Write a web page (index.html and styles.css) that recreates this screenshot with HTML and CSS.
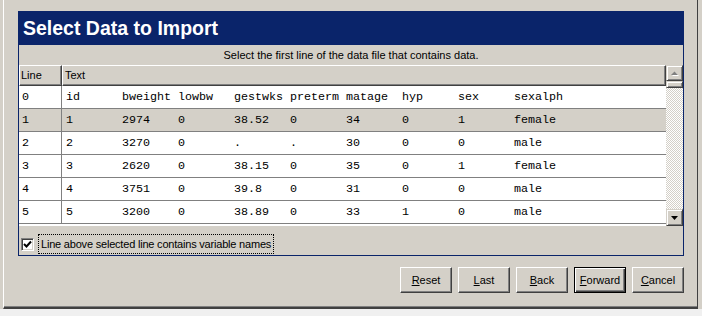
FILE: index.html
```html
<!DOCTYPE html>
<html lang="en">
<head>
    <meta charset="UTF-8">
    <title>Select Data to Import</title>
    <link rel="stylesheet" href="styles.css">
</head>
<body>
    <div class="desk">
        <div class="dialog">
            <div class="panel">
                <div class="title">Select Data to Import</div>
                <div class="hint">Select the first line of the data file that contains data.</div>
                <div class="grid">
                    <div class="table">
                        <div class="head">
                            <span class="num">Line</span>
                            <span class="text">Text</span>
                        </div>
                        <div class="row">
                            <span class="num">0</span>
                            <span class="cells"><span>id</span><span>bweight</span><span>lowbw</span><span>gestwks</span><span>preterm</span><span>matage</span><span>hyp</span><span>sex</span><span>sexalph</span></span>
                        </div>
                        <div class="row selected">
                            <span class="num">1</span>
                            <span class="cells"><span>1</span><span>2974</span><span>0</span><span>38.52</span><span>0</span><span>34</span><span>0</span><span>1</span><span>female</span></span>
                        </div>
                        <div class="row">
                            <span class="num">2</span>
                            <span class="cells"><span>2</span><span>3270</span><span>0</span><span>.</span><span>.</span><span>30</span><span>0</span><span>0</span><span>male</span></span>
                        </div>
                        <div class="row">
                            <span class="num">3</span>
                            <span class="cells"><span>3</span><span>2620</span><span>0</span><span>38.15</span><span>0</span><span>35</span><span>0</span><span>1</span><span>female</span></span>
                        </div>
                        <div class="row">
                            <span class="num">4</span>
                            <span class="cells"><span>4</span><span>3751</span><span>0</span><span>39.8</span><span>0</span><span>31</span><span>0</span><span>0</span><span>male</span></span>
                        </div>
                        <div class="row">
                            <span class="num">5</span>
                            <span class="cells"><span>5</span><span>3200</span><span>0</span><span>38.89</span><span>0</span><span>33</span><span>1</span><span>0</span><span>male</span></span>
                        </div>
                    </div>
                    <div class="scroll">
                        <div class="sbtn">
                            <svg width="8" height="5" viewBox="0 0 8 5"><path d="M1 5h7L4.5 1.5z" fill="#fff"/><path d="M0 4h7L3.5 0.5z" fill="#808080"/></svg>
                        </div>
                        <div class="thumb"></div>
                        <div class="track"></div>
                        <div class="sbtn down">
                            <svg width="7" height="4" viewBox="0 0 7 4"><path d="M0 0h7L3.5 4z" fill="#000"/></svg>
                        </div>
                    </div>
                </div>
                <div class="option">
                    <span class="check">
                        <svg width="9" height="9" viewBox="0 0 9 9"><path d="M1 4l2.5 2.5L8 1.5" fill="none" stroke="#000" stroke-width="2"/></svg>
                    </span>
                    <span class="focus">Line above selected line contains variable names</span>
                </div>
            </div>
            <div class="buttons">
                <button><u>R</u>eset</button>
                <button><u>L</u>ast</button>
                <button><u>B</u>ack</button>
                <button class="default"><u>F</u>orward</button>
                <button><u>C</u>ancel</button>
            </div>
        </div>
    </div>
</body>
</html>
```

FILE: styles.css
```css
body { margin: 0; background: #f0f0f0; font-family: "Liberation Sans", Arial, sans-serif; font-size: 11px; color: #000; }
.desk { height: 309px; background: #d4d0c8; padding-left: 3px; }
.dialog { width: 695px; height: 309px; box-sizing: border-box; border-left: 1px solid #fff; border-right: 1px solid #404040; border-bottom: 2px solid #404040; box-shadow: inset 0 -1px #808080; padding: 11px 13px 0 14px; }

.panel { width: 666px; box-sizing: border-box; border: 1px solid #0a246a; }
.title { height: 33px; line-height: 33px; background: #0a246a; color: #fff; font-size: 19.5px; font-weight: bold; padding-left: 4px; }
.hint { height: 20px; line-height: 20px; text-align: center; }

.grid { display: flex; height: 161px; }
.table { flex: 1; background: #fff; overflow: hidden; }
.head { display: flex; height: 21px; }
.head span { box-sizing: border-box; height: 21px; line-height: 18px; background: #d4d0c8; border-top: 1px solid #fff; border-left: 1px solid #fff; border-bottom: 1px solid #404040; border-right: 1px solid #404040; box-shadow: inset -1px -1px #808080; padding-left: 1px; }
.head .num { width: 43px; }
.head .text { flex: 1; padding-left: 2px; }

.row { display: flex; height: 23px; line-height: 22px; box-sizing: border-box; border-bottom: 1px solid #808080; font-family: "Liberation Mono", "Courier New", monospace; font-size: 11.7px; }
.row.selected { background: #d4d0c8; }
.row .num { width: 43px; box-sizing: border-box; border-right: 1px solid #808080; padding-left: 3px; }
.cells { padding-left: 4px; white-space: nowrap; }
.cells span { display: inline-block; width: 56px; }

.scroll { width: 17px; display: flex; flex-direction: column; }
.sbtn, .thumb { box-sizing: border-box; background: #d4d0c8; border: 1px solid; border-color: #d4d0c8 #404040 #404040 #d4d0c8; box-shadow: inset 1px 1px #fff, inset -1px -1px #808080; }
.sbtn { height: 16px; display: flex; align-items: center; justify-content: center; }
.sbtn.down { height: 17px; }
.thumb { height: 7px; }
.track { flex: 1; background: repeating-conic-gradient(#fff 0 25%, #d4d0c8 0 50%) 0 0 / 2px 2px; }

.option { height: 29px; box-sizing: border-box; display: flex; align-items: flex-start; padding: 8px 0 0 2px; }
.check { width: 13px; height: 13px; box-sizing: border-box; margin-top: 4px; background: #fff; border: 1px solid; border-color: #808080 #fff #fff #808080; box-shadow: inset 1px 1px #404040, inset -1px -1px #d4d0c8; display: flex; align-items: center; justify-content: center; }
.focus { margin-left: 4px; border: 1px dotted #000; padding: 2px 2px; line-height: 14px; letter-spacing: -0.2px; }

.buttons { display: flex; justify-content: flex-end; gap: 6px; margin-top: 11px; }
.buttons button { width: 52px; height: 26px; padding: 0; background: #d4d0c8; font-family: "Liberation Sans", Arial, sans-serif; font-size: 11px; color: #000; border: 1px solid; border-color: #fff #404040 #404040 #fff; box-shadow: inset -1px -1px #808080; }
.buttons button.default { border-color: #000; box-shadow: inset 1px 1px #fff, inset -1px -1px #404040, inset -2px -2px #808080; }
```
